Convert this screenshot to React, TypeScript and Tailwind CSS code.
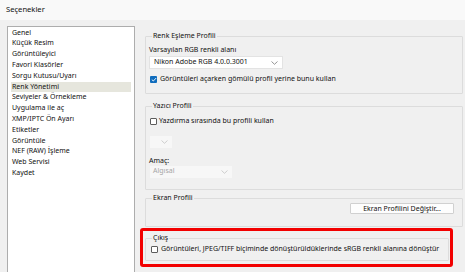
import React from 'react';

const items = [
  'Genel',
  'Küçük Resim',
  'Görüntüleyici',
  'Favori Klasörler',
  'Sorgu Kutusu/Uyarı',
  'Renk Yönetimi',
  'Seviyeler & Örnekleme',
  'Uygulama ile aç',
  'XMP/IPTC Ön Ayarı',
  'Etiketler',
  'Görüntüle',
  'NEF (RAW) İşleme',
  'Web Servisi',
  'Kaydet',
];

function Chevron({ light }: { light?: boolean }) {
  return (
    <svg width="7" height="4" viewBox="0 0 7 4" className="shrink-0">
      <path d="M0.5 0.5 L3.5 3.3 L6.5 0.5" fill="none" stroke={light ? '#c8c8c8' : '#8a8a8a'} strokeWidth="0.9" />
    </svg>
  );
}

function Check({ checked }: { checked?: boolean }) {
  if (checked) {
    return (
      <span className="w-[7px] h-[7px] rounded-[1px] bg-[#0f6cbd] flex items-center justify-center shrink-0">
        <svg width="6" height="5" viewBox="0 0 6 5">
          <path d="M0.8 2.6 L2.3 4 L5.2 1" fill="none" stroke="#fff" strokeWidth="0.9" />
        </svg>
      </span>
    );
  }
  return <span className="w-[7px] h-[7px] rounded-[1px] border border-[#5c5c5c] bg-white shrink-0" />;
}

function Group({ title, className, children }: { title: string; className?: string; children?: React.ReactNode }) {
  return (
    <fieldset className={`border border-[#dcdcdc] rounded-[1px] px-[3px] ${className ?? ''}`}>
      <legend className="ml-[3px] px-[1px] leading-[8px]">{title}</legend>
      {children}
    </fieldset>
  );
}

export default function App() {
  return (
    <div
      className="w-[465px] h-[272px] overflow-hidden bg-[#f0f0f0] text-[7px] text-[#111] whitespace-nowrap flex flex-col"
      style={{ fontFamily: '"Noto Sans", "Open Sans", sans-serif' }}
    >
      <div className="h-[20px] bg-[#f9f9f9] flex items-center pl-[6px] text-[7.6px] shrink-0">Seçenekler</div>
      <div className="flex flex-1 pt-[6px] pl-[7px]">
        <div className="w-[128px] h-[260px] border border-[#adadad] bg-white pt-[0.6px] px-[3px]">
          {items.map((it) => (
            <div
              key={it}
              className={`h-[10.8px] leading-[10.8px] pl-[1px] ${it === 'Renk Yönetimi' ? 'bg-[#e6e6dd]' : ''}`}
            >
              {it}
            </div>
          ))}
        </div>

        <div className="ml-[5px] flex flex-col pt-[6px]">
          <Group title="Renk Eşleme Profili" className="ml-[5px] w-[318px] h-[62px]">
            <div className="mt-[5px] leading-[9px]">Varsayılan RGB renkli alanı</div>
            <div className="mt-[2px] w-[134px] h-[13px] bg-white border border-[#e3e3e3] flex items-center justify-between pl-[4px] pr-[4px]">
              <span>Nikon Adobe RGB 4.0.0.3001</span>
              <Chevron />
            </div>
            <div className="mt-[5px] flex items-center gap-[3px] pl-[1px]">
              <Check checked />
              <span>Görüntüleri açarken gömülü profil yerine bunu kullan</span>
            </div>
          </Group>

          <Group title="Yazıcı Profili" className="ml-[5px] mt-[8px] w-[318px] h-[88px]">
            <div className="mt-[6px] flex items-center gap-[2px] pl-[1px]">
              <Check />
              <span>Yazdırma sırasında bu profili kullan</span>
            </div>
            <div className="mt-[9px] ml-[1px] w-[22px] h-[12px] bg-[#f7f7f7] flex items-center justify-end pr-[4px]">
              <Chevron light />
            </div>
            <div className="mt-[8px] leading-[9px]">Amaç:</div>
            <div className="mt-[1px] ml-[1px] w-[82px] h-[12px] bg-[#f7f7f7] flex items-center justify-between pl-[3px] pr-[4px] text-[#a6a6a6]">
              <span>Algısal</span>
              <Chevron light />
            </div>
          </Group>

          <Group title="Ekran Profili" className="ml-[5px] mt-[4px] w-[318px] h-[33px]">
            <div className="flex justify-end pr-[5px] mt-[1px]">
              <button className="w-[104px] h-[11px] bg-[#fdfdfd] border border-[#d0d0d0] rounded-[1px] leading-[9px] text-[#111]">
                Ekran Profilini Değiştir...
              </button>
            </div>
          </Group>

          <div className="mt-[1px] w-[313px] h-[39px] border-[3px] border-[#f20000] rounded-[3px] pt-[3px]">
            <Group title="Çıkış" className="ml-[2px] w-[304px] h-[27px]">
              <div className="mt-[2px] flex items-center gap-[3px] pl-[2px]">
                <Check />
                <span>Görüntüleri, JPEG/TIFF biçiminde dönüştürüldüklerinde sRGB renkli alanına dönüştür</span>
              </div>
            </Group>
          </div>
        </div>
      </div>
    </div>
  );
}
